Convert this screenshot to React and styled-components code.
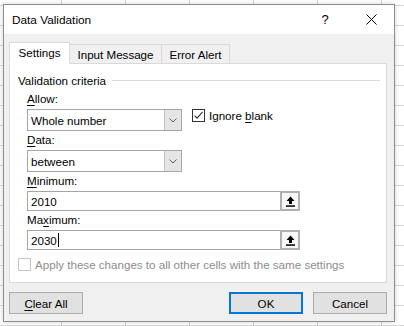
import React from "react";
import styled, { createGlobalStyle } from "styled-components";

const GlobalStyle = createGlobalStyle`
html, body {
  margin: 0;
  padding: 0;
}
body {
  font-family: "Liberation Sans", Arial, sans-serif;
  font-size: 11.6px;
  color: #000;
}
`

const Desktop = styled.div`
width: 404px;
height: 326px;
overflow: hidden;
box-sizing: border-box;
padding: 4px 0 0 3px;
background-color: #fff;
background-image:
  linear-gradient(to right, #d6d6d6 1px, transparent 1px),
  linear-gradient(to bottom, #d6d6d6 1px, transparent 1px);
background-size: 64px 20px;
background-position: 61px 5px;
`

const Window = styled.div`
width: 392px;
height: 318px;
box-sizing: border-box;
border: 1px solid #8f8f8f;
background: #f0f0f0;
box-shadow: 0 0 5px rgba(0, 0, 0, 0.18);
display: flex;
flex-direction: column;
`

const TitleBar = styled.div`
height: 29px;
background: #fff;
display: flex;
align-items: center;
padding-left: 8px;
`

const Title = styled.div`
flex: 1;
font-size: 11.8px;
`

const TitleButton = styled.div`
width: 46px;
height: 29px;
display: flex;
align-items: center;
justify-content: center;
font-size: 13px;
`

const Body = styled.div`
display: flex;
flex-direction: column;
padding: 8px 7px 0 5px;
`

const TabRow = styled.div`
display: flex;
align-items: flex-end;
height: 22px;
margin-bottom: -1px;
position: relative;
z-index: 1;
`

const Tab = styled.div`
width: ${p => p.$w}px;
height: ${p => (p.$active ? 22 : 20)}px;
box-sizing: border-box;
border: 1px solid #d9d9d9;
border-bottom: ${p => (p.$active ? "1px solid #fff" : "1px solid #d9d9d9")};
border-left: ${p => (p.$first || p.$active ? "1px solid #d9d9d9" : "none")};
background: ${p => (p.$active ? "#fff" : "#f0f0f0")};
display: flex;
align-items: center;
justify-content: center;
padding-bottom: ${p => (p.$active ? 2 : 0)}px;
`

const Panel = styled.div`
height: 220px;
box-sizing: border-box;
background: #fff;
border: 1px solid #d9d9d9;
padding: 8px 6px 0 8px;
display: flex;
flex-direction: column;
`

const GroupHeader = styled.div`
height: 16px;
display: flex;
align-items: center;
gap: 6px;
`

const GroupLine = styled.div`
flex: 1;
height: 1px;
background: #dcdcdc;
`

const Fields = styled.div`
display: flex;
flex-direction: column;
gap: 1px;
padding-left: 9px;
margin-top: 3px;
`

const Field = styled.div`
display: flex;
flex-direction: column;
gap: 2px;
`

const Label = styled.div`
height: 16px;
line-height: 16px;
`

const U = styled.span`
text-decoration: underline;
text-underline-offset: 2px;
`

const ControlRow = styled.div`
display: flex;
align-items: flex-start;
gap: 10px;
`

const Select = styled.div`
width: 155px;
height: 22px;
box-sizing: border-box;
border: 1px solid #a6a6a6;
background: #fff;
display: flex;
align-items: stretch;
`

const SelectValue = styled.div`
flex: 1;
display: flex;
align-items: center;
padding-left: 3px;
`

const DropButton = styled.div`
width: 17px;
box-sizing: border-box;
background: #e5e5e5;
border-left: 1px solid #c4c4c4;
display: flex;
align-items: center;
justify-content: center;
`

const Check = styled.div`
width: 13px;
height: 13px;
box-sizing: border-box;
border: 1px solid ${p => (p.$disabled ? "#c6c6c6" : "#333")};
background: #fff;
display: flex;
align-items: center;
justify-content: center;
flex-shrink: 0;
`

const CheckLabel = styled.label`
display: flex;
align-items: center;
gap: 4px;
color: ${p => (p.$disabled ? "#8d8d8d" : "#000")};
`

const TextBox = styled.div`
width: 273px;
height: 20px;
box-sizing: border-box;
border: 1px solid #a6a6a6;
background: #fff;
display: flex;
align-items: stretch;
`

const TextValue = styled.div`
flex: 1;
display: flex;
align-items: center;
padding-left: 3px;
`

const Caret = styled.span`
display: inline-block;
width: 1px;
height: 14px;
background: #000;
margin-left: 1px;
`

const RefButton = styled.div`
width: 20px;
box-sizing: border-box;
border: 2px solid #b0b0b0;
margin: -1px -1px -1px 0;
background: #f7f7f7;
display: flex;
align-items: center;
justify-content: center;
`

const ApplyRow = styled.div`
margin-top: 8px;
`

const ButtonRow = styled.div`
display: flex;
align-items: center;
margin-top: 9px;
padding: 0 7px 0 5px;
`

const Button = styled.div`
width: 74px;
height: 22px;
box-sizing: border-box;
border: ${p => (p.$default ? "2px solid #0078d7" : "1px solid #adadad")};
background: #e1e1e1;
display: flex;
align-items: center;
justify-content: center;
margin-left: ${p => p.$gap || 0}px;
`

const Spacer = styled.div`
flex: 1;
`

const Chevron = () => (
  <svg width="8" height="5" viewBox="0 0 8 5">
    <path d="M0.5 0.5 L4 4 L7.5 0.5" fill="none" stroke="#606060" strokeWidth="1" />
  </svg>
)

const CheckMark = () => (
  <svg width="11" height="11" viewBox="0 0 11 11">
    <path d="M1.5 5.5 L4 8.2 L9.5 2" fill="none" stroke="#222" strokeWidth="1.1" />
  </svg>
)

const RefArrow = () => (
  <svg width="9" height="11" viewBox="0 0 9 11">
    <path d="M4.5 0.5 L8.5 5 H6 V8 H3 V5 H0.5 Z" fill="#000" />
    <rect x="0" y="9.3" width="9" height="1.5" fill="#000" />
  </svg>
)

const CloseIcon = () => (
  <svg width="11" height="11" viewBox="0 0 11 11">
    <path d="M0.5 0.5 L10.5 10.5 M10.5 0.5 L0.5 10.5" stroke="#000" strokeWidth="1" />
  </svg>
)

const DataValidation = () => {
  return (
    <Window>
      <TitleBar>
        <Title>Data Validation</Title>
        <TitleButton>?</TitleButton>
        <TitleButton><CloseIcon /></TitleButton>
      </TitleBar>
      <Body>
        <TabRow>
          <Tab $w={61} $active $first>Settings</Tab>
          <Tab $w={92}>Input Message</Tab>
          <Tab $w={68}>Error Alert</Tab>
        </TabRow>
        <Panel>
          <GroupHeader>
            <span>Validation criteria</span>
            <GroupLine />
          </GroupHeader>
          <Fields>
            <Field>
              <Label><U>A</U>llow:</Label>
              <ControlRow>
                <Select>
                  <SelectValue>Whole number</SelectValue>
                  <DropButton><Chevron /></DropButton>
                </Select>
                <CheckLabel>
                  <Check><CheckMark /></Check>
                  <span>Ignore <U>b</U>lank</span>
                </CheckLabel>
              </ControlRow>
            </Field>
            <Field>
              <Label><U>D</U>ata:</Label>
              <Select>
                <SelectValue>between</SelectValue>
                <DropButton><Chevron /></DropButton>
              </Select>
            </Field>
            <Field>
              <Label><U>M</U>inimum:</Label>
              <TextBox>
                <TextValue>2010</TextValue>
                <RefButton><RefArrow /></RefButton>
              </TextBox>
            </Field>
            <Field>
              <Label>Ma<U>x</U>imum:</Label>
              <TextBox>
                <TextValue>2030<Caret /></TextValue>
                <RefButton><RefArrow /></RefButton>
              </TextBox>
            </Field>
          </Fields>
          <ApplyRow>
            <CheckLabel $disabled>
              <Check $disabled />
              <span>Apply these changes to all other cells with the same settings</span>
            </CheckLabel>
          </ApplyRow>
        </Panel>
      </Body>
      <ButtonRow>
        <Button><span><U>C</U>lear All</span></Button>
        <Spacer />
        <Button $default>OK</Button>
        <Button $gap={10}>Cancel</Button>
      </ButtonRow>
    </Window>
  )
}

const App = () => {
  return (
    <>
      <GlobalStyle />
      <Desktop>
        <DataValidation />
      </Desktop>
    </>
  )
}

export default App;
